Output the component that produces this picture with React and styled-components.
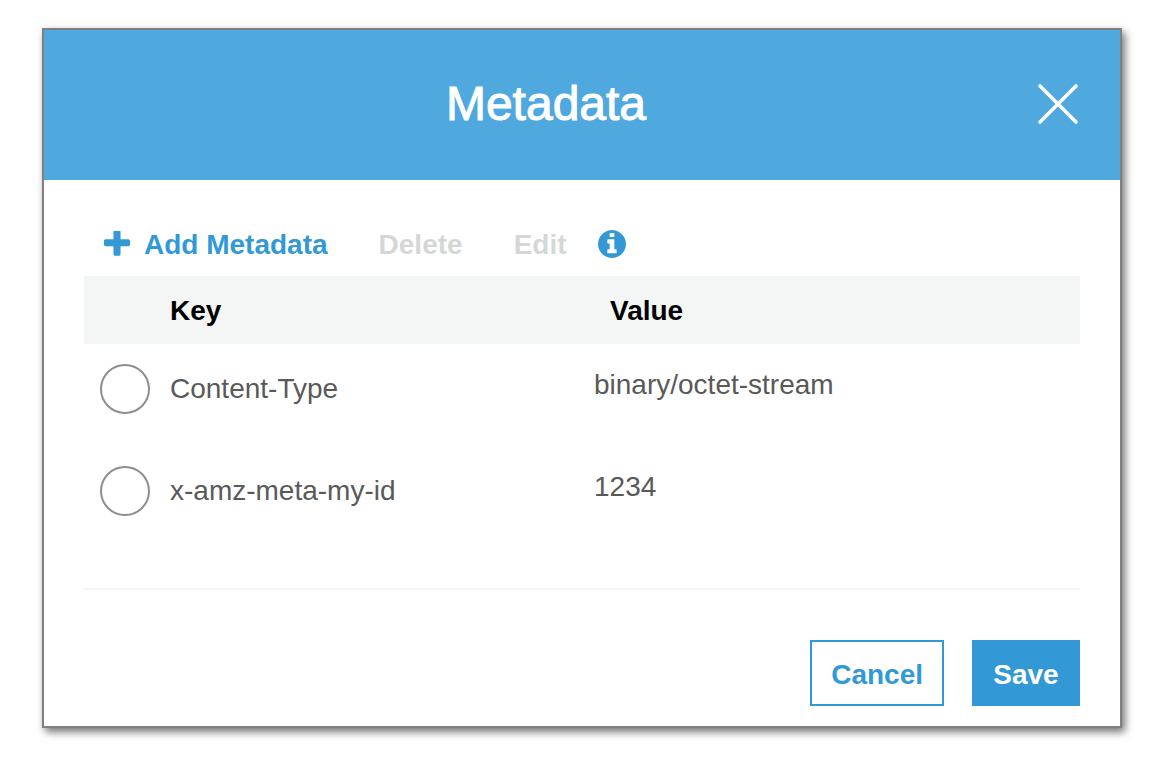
import React, { useState } from "react";
import styled, { createGlobalStyle } from "styled-components";

const metadata = [
  { id: "content-type", key: "Content-Type", value: "binary/octet-stream" },
  { id: "my-id", key: "x-amz-meta-my-id", value: "1234" },
];

const App = () => {
  const [selected, setSelected] = useState(null);

  return (
    <>
      <GlobalStyle />
      <Dialog role="dialog" aria-labelledby="dialog-title">
        <Header>
          <Title id="dialog-title">Metadata</Title>
          <CloseButton type="button" aria-label="Close">
            <svg width="44" height="44" viewBox="0 0 44 44">
              <path
                d="M4 4 L40 40 M40 4 L4 40"
                fill="none"
                stroke="#fff"
                strokeWidth="3.6"
                strokeLinecap="round"
              />
            </svg>
          </CloseButton>
        </Header>
        <Body>
          <Toolbar>
            <Actions>
              <ToolButton type="button">
                <svg width="26" height="26" viewBox="192 192 1408 1408" fill="currentColor">
                  <path d="M1600 736v192q0 40-28 68t-68 28h-416v416q0 40-28 68t-68 28h-192q-40 0-68-28t-28-68v-416h-416q-40 0-68-28t-28-68v-192q0-40 28-68t68-28h416v-416q0-40 28-68t68-28h192q40 0 68 28t28 68v416h416q40 0 68 28t28 68z" />
                </svg>
                Add Metadata
              </ToolButton>
              <ToolButton type="button" disabled={selected === null}>
                Delete
              </ToolButton>
              <ToolButton type="button" disabled={selected === null}>
                Edit
              </ToolButton>
            </Actions>
            <ToolButton type="button" aria-label="About metadata">
              <svg width="28" height="28" viewBox="128 128 1536 1536" fill="currentColor">
                <path d="M1152 1376v-160q0-14-9-23t-23-9h-96v-512q0-14-9-23t-23-9h-320q-14 0-23 9t-9 23v160q0 14 9 23t23 9h96v320h-96q-14 0-23 9t-9 23v160q0 14 9 23t23 9h448q14 0 23-9t9-23zm-128-896v-160q0-14-9-23t-23-9h-192q-14 0-23 9t-9 23v160q0 14 9 23t23 9h192q14 0 23-9t9-23zm640 416q0 209-103 385.500t-279.500 279.500-385.500 103-385.500-103-279.500-279.500-103-385.500 103-385.500 279.500-279.500 385.500-103 385.500 103 279.500 279.500 103 385.500z" />
              </svg>
            </ToolButton>
          </Toolbar>
          <Table>
            <thead>
              <tr>
                <HeadCell $width="70px" />
                <HeadCell $width="440px">Key</HeadCell>
                <HeadCell>Value</HeadCell>
              </tr>
            </thead>
            <tbody>
              {metadata.map((item) => (
                <tr key={item.id}>
                  <RadioCell>
                    <Radio
                      type="radio"
                      name="metadata"
                      id={item.id}
                      checked={selected === item.id}
                      onChange={() => setSelected(item.id)}
                    />
                  </RadioCell>
                  <KeyCell>
                    <label htmlFor={item.id}>{item.key}</label>
                  </KeyCell>
                  <ValueCell>{item.value}</ValueCell>
                </tr>
              ))}
            </tbody>
          </Table>
          <Footer>
            <Button type="button">Cancel</Button>
            <Button type="button" $primary>
              Save
            </Button>
          </Footer>
        </Body>
      </Dialog>
    </>
  );
};

export default App;

const GlobalStyle = createGlobalStyle`
  * {
    box-sizing: border-box;
  }

  body {
    margin: 0;
    background-color: #fff;
    color: #585a5a;
    font-family: "Liberation Sans", Arial, sans-serif;
    font-size: 28px;
    line-height: 32px;
  }

  button {
    font: inherit;
    font-weight: bold;
    cursor: pointer;
  }

  svg {
    display: block;
    flex: none;
  }
`;

const Dialog = styled.div`
  margin: 28px 48px 54px 42px;
  border: 2px solid #808080;
  background-color: #fff;
  box-shadow: 3px 4px 8px rgba(0, 0, 0, 0.55);
`;

const Header = styled.div`
  display: flex;
  align-items: center;
  padding: 46px 40px 48px;
  background-color: #4fa8de;
  color: #fff;
`;

const Title = styled.h1`
  flex: 1;
  margin: 0;
  font-size: 48px;
  font-weight: normal;
  line-height: 56px;
  text-align: center;
  -webkit-text-stroke: 1px #fff;
`;

const CloseButton = styled.button`
  display: flex;
  justify-content: flex-end;
  width: 72px;
  padding: 0;
  border: none;
  background: none;
`;

const Body = styled.div`
  padding: 0 40px 20px;
`;

const Toolbar = styled.div`
  display: flex;
  align-items: center;
  gap: 31px;
  padding: 49px 20px 15px;
`;

const Actions = styled.div`
  display: flex;
  gap: 51px;
`;

const ToolButton = styled.button`
  display: flex;
  align-items: center;
  gap: 14px;
  padding: 0;
  border: none;
  background: none;
  color: #3299d6;

  svg {
    margin-bottom: 2px;
  }

  &:disabled {
    color: #d5d7d7;
    cursor: default;
  }
`;

const Table = styled.table`
  width: 100%;
  table-layout: fixed;
  border-collapse: collapse;
`;

const HeadCell = styled.th`
  width: ${(props) => props.$width || "auto"};
  padding: 19px 16px 17px;
  background-color: #f4f6f6;
  color: #000;
  text-align: left;
`;

const RadioCell = styled.td`
  padding: 20px 0 32px 16px;
  vertical-align: top;
`;

const Radio = styled.input`
  display: block;
  appearance: none;
  width: 50px;
  height: 50px;
  margin: 0;
  border: 2px solid #8a8f8f;
  border-radius: 50%;
  background-color: #fff;

  &:checked {
    box-shadow: inset 0 0 0 12px #fff;
    background-color: #3299d6;
  }
`;

const KeyCell = styled.td`
  padding: 29px 16px;
  vertical-align: top;
`;

const ValueCell = styled.td`
  padding: 25px 0;
  vertical-align: top;
`;

const Footer = styled.div`
  display: flex;
  justify-content: flex-end;
  gap: 28px;
  margin-top: 40px;
  padding-top: 50px;
  border-top: 2px solid #f4f6f6;
`;

const Button = styled.button`
  min-width: 108px;
  padding: 17px 19px 13px;
  border: 2px solid #3299d6;
  background-color: ${(props) => (props.$primary ? "#3299d6" : "#fff")};
  color: ${(props) => (props.$primary ? "#fff" : "#3299d6")};
`;
